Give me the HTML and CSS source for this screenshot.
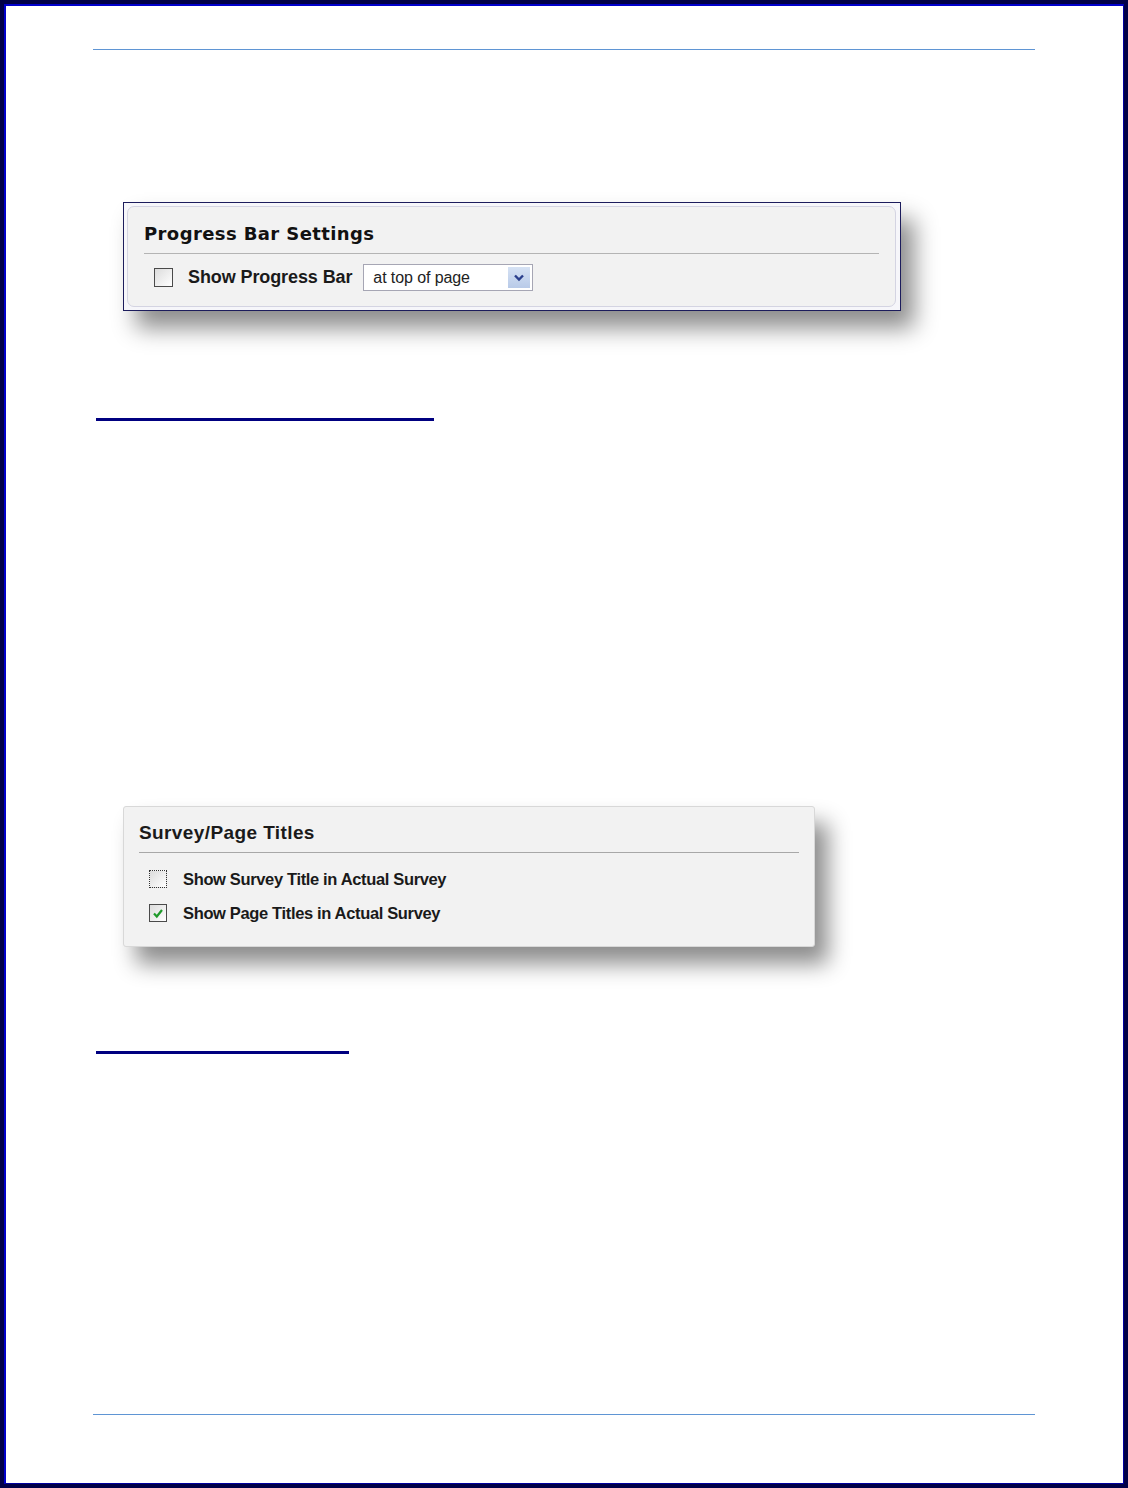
FILE: index.html
```html
<!DOCTYPE html>
<html lang="en">
<head>
    <meta charset="UTF-8">
    <title>Survey Settings</title>
    <link rel="stylesheet" href="styles.css">
</head>
<body>
    <div class="page">
        <div class="sheet">
            <div class="rule header-rule"></div>

            <!-- Progress bar panel -->
            <div class="shot shot-progress">
                <div class="progress-panel">
                    <div class="panel-title">Progress Bar Settings</div>
                    <div class="panel-sep"></div>
                    <div class="progress-row">
                        <span class="check"></span>
                        <span class="progress-label">Show Progress Bar</span>
                        <div class="select">
                            <span class="select-text">at top of page</span>
                            <span class="select-btn">
                                <svg width="12" height="9" viewBox="0 0 12 9"><path d="M2 2.5 L6 6.5 L10 2.5" fill="none" stroke="#2b3f8c" stroke-width="2.4"/></svg>
                            </span>
                        </div>
                    </div>
                </div>
            </div>

            <div class="underline underline-one"></div>

            <!-- Titles panel -->
            <div class="shot shot-titles">
                <div class="titles-title">Survey/Page Titles</div>
                <div class="panel-sep titles-sep"></div>
                <div class="titles-row first-row">
                    <span class="check small dotted"></span>
                    <span class="titles-label">Show Survey Title in Actual Survey</span>
                </div>
                <div class="titles-row">
                    <span class="check small checked">
                        <svg width="12" height="11" viewBox="0 0 12 11"><path d="M2 5.5 L4.8 8.5 L10 2" fill="none" stroke="#1f9a2a" stroke-width="2.2"/></svg>
                    </span>
                    <span class="titles-label">Show Page Titles in Actual Survey</span>
                </div>
            </div>

            <div class="underline underline-two"></div>

            <div class="rule footer-rule"></div>
        </div>
    </div>
</body>
</html>
```

FILE: styles.css
```css
/* General */
html, body {
    margin: 0;
    padding: 0;
    background: #ffffff;
}

body {
    font-family: 'Liberation Sans', Arial, sans-serif;
}

.page {
    width: 1128px;
    height: 1488px;
    box-sizing: border-box;
    border: 4px solid #000048;
}

.sheet {
    height: 100%;
    box-sizing: border-box;
    border-top: 2px solid #0000cc;
    border-left: 2px solid #0000cc;
    border-right: 1px solid #0000a0;
    border-bottom: 1px solid #0000a0;
    background: #ffffff;
    display: flex;
    flex-direction: column;
}

.rule {
    width: 942px;
    height: 1px;
    background: #5f95d4;
    margin-left: 87px;
}

.header-rule {
    margin-top: 43px;
}

.footer-rule {
    margin-top: auto;
    margin-bottom: 68px;
}

.underline {
    height: 3px;
    background: #000080;
    margin-left: 90px;
}

.underline-one {
    width: 338px;
    margin-top: 107px;
}

.underline-two {
    width: 253px;
    margin-top: 104px;
}

/* Screenshot panels */
.shot {
    margin-left: 117px;
    box-sizing: border-box;
    box-shadow: 13px 17px 22px rgba(0, 0, 0, 0.45);
}

.shot-progress {
    width: 778px;
    height: 109px;
    margin-top: 152px;
    border: 1px solid #1c1c5c;
    background: #f6f6fa;
    padding: 3px 4px 3px 3px;
}

.progress-panel {
    height: 100%;
    box-sizing: border-box;
    border: 1px solid #d4d4e2;
    border-radius: 7px;
    background: #f2f2f2;
    padding: 15px 16px 0 16px;
}

.panel-title {
    font-family: 'DejaVu Sans', Verdana, sans-serif;
    font-weight: bold;
    font-size: 18px;
    line-height: 24px;
    color: #111111;
    letter-spacing: 0.4px;
}

.panel-sep {
    height: 1px;
    background: #b4b4b4;
    margin-top: 7px;
}

.progress-row {
    display: flex;
    align-items: center;
    margin-top: 10px;
    padding-left: 10px;
}

.check {
    width: 19px;
    height: 19px;
    box-sizing: border-box;
    border: 1px solid #4a4a4a;
    background: linear-gradient(135deg, #dcdcdc, #ffffff);
    display: inline-flex;
    align-items: center;
    justify-content: center;
    flex: none;
}

.check.small {
    width: 18px;
    height: 18px;
}

.check.dotted {
    border: 1px dotted #333333;
}

.progress-label {
    margin-left: 15px;
    font-weight: bold;
    font-size: 18px;
    color: #1a1a1a;
    letter-spacing: -0.1px;
}

.select {
    margin-left: 11px;
    width: 170px;
    height: 27px;
    box-sizing: border-box;
    border: 1px solid #a6a6b4;
    background: #ffffff;
    display: flex;
    align-items: center;
    justify-content: space-between;
    padding: 0 2px 0 9px;
}

.select-text {
    font-size: 16px;
    color: #222222;
    letter-spacing: -0.1px;
}

.select-btn {
    width: 22px;
    height: 21px;
    background: linear-gradient(#d6e2f4, #b8cae8);
    display: flex;
    align-items: center;
    justify-content: center;
}

.shot-titles {
    width: 692px;
    height: 141px;
    margin-top: 385px;
    border: 1px solid #d8d8d8;
    border-radius: 3px;
    background: #f2f2f2;
    padding: 15px 15px 0 15px;
}

.titles-title {
    font-weight: bold;
    font-size: 19px;
    line-height: 22px;
    color: #1a1a1a;
    letter-spacing: 0.4px;
}

.titles-sep {
    margin-top: 8px;
    background: #a8a8a8;
}

.titles-row {
    display: flex;
    align-items: center;
    height: 22px;
    margin-top: 12px;
    padding-left: 10px;
}

.first-row {
    margin-top: 15px;
}

.titles-label {
    margin-left: 16px;
    font-weight: bold;
    font-size: 16.5px;
    color: #1a1a1a;
    letter-spacing: -0.35px;
}
```
